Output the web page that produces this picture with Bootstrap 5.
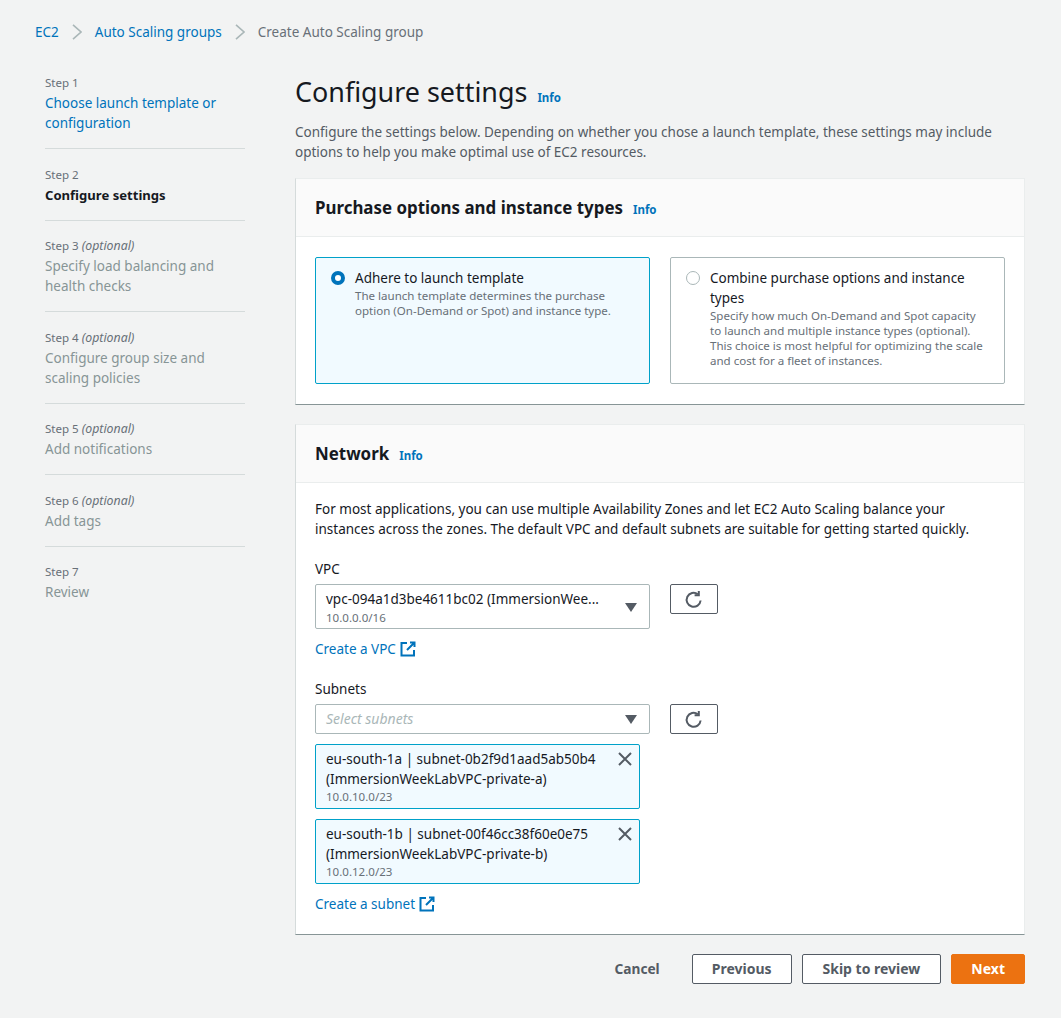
<!doctype html>
<html lang="en">
<head>
<meta charset="utf-8">
<title>Configure settings</title>
<link href="https://cdn.jsdelivr.net/npm/bootstrap@5.3.0/dist/css/bootstrap.min.css" rel="stylesheet">
<style>
html,body{height:100%}
body{background:#f2f3f3;color:#16191f;font:13.5px/20px "Noto Sans","Open Sans",sans-serif;overflow:hidden}
a{color:#0073bb;text-decoration:none}
.page-shell{padding:22px 36px 0 35px;width:1061px}
.crumbs{height:20px;margin-bottom:33px;color:#687078;gap:13px}
.crumbs svg{width:10px;height:16px;stroke:#aab7b8;fill:none;stroke-width:1.6;flex:none}
.layout{gap:50px;padding-left:10px}
.wizard{width:200px;flex:none}
.wstep{border-bottom:1px solid #d5dbdb;padding:0 0 15px;margin-bottom:17.55px}
.wstep:last-child{border:0}
.wlabel{font-size:11.55px;line-height:16px;color:#687078;margin-bottom:2px}
.wlabel i{font-style:italic;font-size:12.3px}
.wmuted{color:#879596}
.wcur{font-weight:700;font-size:13.1px;color:#16191f}
.main-col{width:730px;flex:none}
.title-row{padding-top:1px}
.page-title{font-size:26.9px;line-height:32px;font-weight:400;margin:0}
.info-link{font-size:11.5px;font-weight:700;line-height:16px;margin-left:10px}
.intro{color:#545b64;margin:14px 0 16px}
.panel-box{background:#fff;border:0;border-radius:0;border-left:1px solid #d5dbdb;border-right:1px solid #eaeded;border-top:1px solid #eaeded;border-bottom:1px solid #879596;margin-bottom:19px}
.panel-head{background:#fafafa;border-bottom:1px solid #eaeded;padding:18px 19px 0;height:58px}
.panel-title{font-size:16.9px;line-height:22px;font-weight:700;margin:0}
.panel-body-x{padding:20px 19px}
.panel-body-net{padding-top:16px}
.tiles{gap:20px}
.tile{width:335px;height:127px;border:1px solid #aab7b8;border-radius:2px;padding:10px 15px;gap:10px}
.tile-on{background:#f1faff;border-color:#00a1c9}
.dot{width:14px;height:14px;border-radius:50%;border:1px solid #aab7b8;flex:none;margin-top:3px;background:#fff}
.dot-on{border:4px solid #0073bb}
.tsub{font-size:11.55px;line-height:15px;color:#687078}
.field-label{margin-bottom:5px;height:20px}
.field-gap{margin-top:20px}
.link-gap{margin-top:10px}
.sel-box{width:335px;border:1px solid #aab7b8;border-radius:2px;background:#fff;padding:4px 10px;gap:10px}
.sel-two{padding-bottom:2px}
.sel-sub{font-size:11.55px;line-height:16px;color:#687078}
.sel-two .sel-sub{margin-top:1px}
.sel-arrow{width:0;height:0;border-left:6.5px solid transparent;border-right:6.5px solid transparent;border-top:9px solid #545b64;margin-right:2px;flex:none}
.refresh{width:48px;height:30px;border:1px solid #545b64;border-radius:2px;background:#fff;padding:0;flex:none}
.sel-row{gap:20px}
.hint-text{color:#aab7b8;font-style:italic;font-size:14px}
.token{width:325px;border:1px solid #00a1c9;border-radius:2px;background:#f1faff;padding:4px 6px 3px 10px;margin-top:10px}
.tok-x{flex:none;width:16px;height:16px;margin-top:2px;stroke:#545b64;stroke-width:2;fill:none}
.ext{width:16px;height:16px;vertical-align:-3px;margin-left:4px;fill:none;stroke:#0073bb;stroke-width:2}
.act-row{gap:10px}
.act-btn{height:30px;border:1px solid #545b64;border-radius:2px;background:#fff;color:#545b64;font-weight:700;padding:0 19px;font-size:14px;line-height:28px}
.act-wide{padding:0 20px}
.act-plain{color:#545b64;font-weight:700;font-size:13.7px;margin-right:22px}
.act-next{background:#ec7211;border-color:#ec7211;color:#fff}
</style>
</head>
<body>
<div class="page-shell">
  <nav class="crumbs d-flex align-items-center">
    <a href="#">EC2</a>
    <svg viewBox="0 0 10 16"><path d="M1 .8 9 8l-8 7.2"/></svg>
    <a href="#">Auto Scaling groups</a>
    <svg viewBox="0 0 10 16"><path d="M1 .8 9 8l-8 7.2"/></svg>
    <span>Create Auto Scaling group</span>
  </nav>
  <div class="layout d-flex">
    <aside class="wizard">
      <div class="wstep"><div class="wlabel">Step 1</div><a href="#">Choose launch template or configuration</a></div>
      <div class="wstep"><div class="wlabel">Step 2</div><div class="wcur">Configure settings</div></div>
      <div class="wstep"><div class="wlabel">Step 3 <i>(optional)</i></div><div class="wmuted">Specify load balancing and health checks</div></div>
      <div class="wstep"><div class="wlabel">Step 4 <i>(optional)</i></div><div class="wmuted">Configure group size and scaling policies</div></div>
      <div class="wstep"><div class="wlabel">Step 5 <i>(optional)</i></div><div class="wmuted">Add notifications</div></div>
      <div class="wstep"><div class="wlabel">Step 6 <i>(optional)</i></div><div class="wmuted">Add tags</div></div>
      <div class="wstep"><div class="wlabel">Step 7</div><div class="wmuted">Review</div></div>
    </aside>
    <main class="main-col">
      <div class="title-row d-flex align-items-baseline">
        <h1 class="page-title">Configure settings</h1><a class="info-link" href="#">Info</a>
      </div>
      <p class="intro">Configure the settings below. Depending on whether you chose a launch template, these settings may include options to help you make optimal use of EC2 resources.</p>

      <section class="card panel-box">
        <div class="panel-head d-flex align-items-baseline"><h2 class="panel-title">Purchase options and instance types</h2><a class="info-link" href="#">Info</a></div>
        <div class="panel-body-x">
          <div class="tiles d-flex">
            <div class="tile tile-on d-flex">
              <span class="dot dot-on"></span>
              <div><div>Adhere to launch template</div><div class="tsub">The launch template determines the purchase option (On-Demand or Spot) and instance type.</div></div>
            </div>
            <div class="tile d-flex">
              <span class="dot"></span>
              <div><div>Combine purchase options and instance types</div><div class="tsub">Specify how much On-Demand and Spot capacity to launch and multiple instance types (optional). This choice is most helpful for optimizing the scale and cost for a fleet of instances.</div></div>
            </div>
          </div>
        </div>
      </section>

      <section class="card panel-box">
        <div class="panel-head d-flex align-items-baseline"><h2 class="panel-title">Network</h2><a class="info-link" href="#">Info</a></div>
        <div class="panel-body-x panel-body-net">
          <p class="mb-0">For most applications, you can use multiple Availability Zones and let EC2 Auto Scaling balance your instances across the zones. The default VPC and default subnets are suitable for getting started quickly.</p>

          <div class="field-label field-gap">VPC</div>
          <div class="sel-row d-flex align-items-start">
            <div class="sel-box sel-two d-flex align-items-center">
              <div class="flex-grow-1"><div>vpc-094a1d3be4611bc02 (ImmersionWee...</div><div class="sel-sub">10.0.0.0/16</div></div>
              <span class="sel-arrow"></span>
            </div>
            <button class="refresh" aria-label="Refresh" type="button"><svg width="20" height="20" viewBox="0 0 20 20" fill="none" stroke="#545b64" stroke-width="2"><path d="M16.6 10.5A7 7 0 1 1 13.8 4.2"/><path d="M14.8 1v4.2h-4.2"/></svg></button>
          </div>
          <div class="link-gap"><a href="#">Create a VPC<svg class="ext" viewBox="0 0 16 16"><path d="M7 2H1.5v12.5H14V9M10 1.5h4.5V6M14 2 7 9"/></svg></a></div>

          <div class="field-label field-gap">Subnets</div>
          <div class="sel-row d-flex align-items-start">
            <div class="sel-box d-flex align-items-center">
              <div class="flex-grow-1 hint-text">Select subnets</div>
              <span class="sel-arrow"></span>
            </div>
            <button class="refresh" aria-label="Refresh" type="button"><svg width="20" height="20" viewBox="0 0 20 20" fill="none" stroke="#545b64" stroke-width="2"><path d="M16.6 10.5A7 7 0 1 1 13.8 4.2"/><path d="M14.8 1v4.2h-4.2"/></svg></button>
          </div>
          <div class="token d-flex">
            <div class="flex-grow-1">eu-south-1a | subnet-0b2f9d1aad5ab50b4<br>(ImmersionWeekLabVPC-private-a)<div class="sel-sub">10.0.10.0/23</div></div>
            <svg class="tok-x" viewBox="0 0 16 16"><path d="M2 2l12 12M14 2 2 14"/></svg>
          </div>
          <div class="token d-flex">
            <div class="flex-grow-1">eu-south-1b | subnet-00f46cc38f60e0e75<br>(ImmersionWeekLabVPC-private-b)<div class="sel-sub">10.0.12.0/23</div></div>
            <svg class="tok-x" viewBox="0 0 16 16"><path d="M2 2l12 12M14 2 2 14"/></svg>
          </div>
          <div class="link-gap"><a href="#">Create a subnet<svg class="ext" viewBox="0 0 16 16"><path d="M7 2H1.5v12.5H14V9M10 1.5h4.5V6M14 2 7 9"/></svg></a></div>
        </div>
      </section>

      <div class="act-row d-flex justify-content-end align-items-center">
        <span class="act-plain">Cancel</span>
        <button class="act-btn" type="button">Previous</button>
        <button class="act-btn act-wide" type="button">Skip to review</button>
        <button class="act-btn act-next" type="button">Next</button>
      </div>
    </main>
  </div>
</div>
<script src="https://cdn.jsdelivr.net/npm/bootstrap@5.3.0/dist/js/bootstrap.bundle.min.js"></script>
</body>
</html>
